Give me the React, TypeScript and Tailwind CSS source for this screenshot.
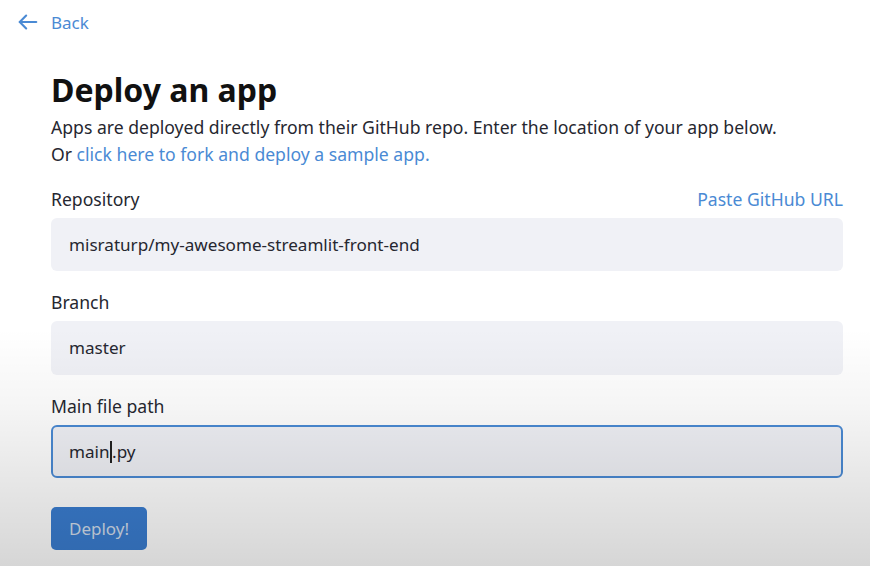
import React from "react";

export default function App() {
  return (
    <div
      className="relative w-[870px] h-[566px] overflow-hidden bg-white text-[#262730]"
      style={{ fontFamily: '"Noto Sans", "Open Sans", sans-serif' }}
    >
      <div className="flex items-center gap-[12px] pl-[17px] pt-[9px] h-[26px] box-content text-[#4a8ad4]">
        <svg width="22" height="22" viewBox="0 0 24 24" fill="none" stroke="currentColor" strokeWidth="2.3" strokeLinecap="round" strokeLinejoin="round">
          <path d="M21 12H3" />
          <path d="M10 5l-7 7 7 7" />
        </svg>
        <span className="text-[17px] leading-none">Back</span>
      </div>

      <div className="pl-[51px] pr-[27px] pt-[35px]">
        <h1 className="text-[32px] font-bold leading-[40px] text-[#111]">Deploy an app</h1>
        <p className="mt-[4px] text-[17.6px] leading-[27px]">
          Apps are deployed directly from their GitHub repo. Enter the location of your app below.
        </p>
        <p className="text-[17.6px] leading-[27px]">
          Or <span className="text-[#4a8ad4]">click here to fork and deploy a sample app.</span>
        </p>

        <div className="mt-[19px] flex items-end justify-between">
          <span className="text-[17.6px] leading-[24px]">Repository</span>
          <span className="text-[17.6px] leading-[24px] text-[#4a8ad4]">Paste GitHub URL</span>
        </div>
        <div className="mt-[7px] h-[53px] rounded-[6px] bg-[#f0f1f6] flex items-center px-[18px] text-[17.1px]">
          misraturp/my-awesome-streamlit-front-end
        </div>

        <div className="mt-[19px] text-[17.6px] leading-[24px]">Branch</div>
        <div className="mt-[7px] h-[54px] rounded-[6px] bg-[#f0f1f6] flex items-center px-[18px] text-[17.1px]">
          master
        </div>

        <div className="mt-[19px] text-[17.6px] leading-[24px]">Main file path</div>
        <div className="mt-[7px] h-[53px] rounded-[6px] bg-[#f0f1f6] border-2 border-[#4a8ad4] flex items-center px-[16px] text-[17.1px]">
          <span>main</span>
          <span className="inline-block w-[1.5px] h-[22px] bg-[#222] mx-[0.5px]" />
          <span>.py</span>
        </div>

        <button className="mt-[29px] h-[43px] w-[96px] rounded-[5px] bg-[#3a7dd0] text-[#d3deec] text-[17px]">
          Deploy!
        </button>
      </div>

      <div className="pointer-events-none absolute inset-0 bg-[linear-gradient(to_bottom,rgba(0,0,0,0)_0%,rgba(0,0,0,0)_58%,rgba(0,0,0,0.04)_72%,rgba(0,0,0,0.16)_100%)]" />
    </div>
  );
}
